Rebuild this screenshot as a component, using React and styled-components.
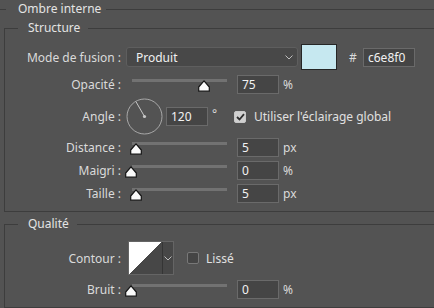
import React from 'react';
import styled, { createGlobalStyle } from 'styled-components';

const Global = createGlobalStyle`
  html, body { margin: 0; padding: 0; background: #535353; }
  body {
    width: 434px; height: 308px; overflow: hidden;
    font-family: "Noto Sans", "Open Sans", sans-serif;
    font-size: 12px; color: #dadada;
  }
`;

const Panel = styled.div`
  width: 434px;
  height: 308px;
  overflow: hidden;
  background: #535353;
`;

const Outer = styled.fieldset`
  margin: 0;
  padding: 0;
  min-width: 0;
  border: none;
  border-top: 1px solid #3d3d3d;
`;

const OuterLegend = styled.legend`
  margin-left: 6px;
  padding: 0 5px 0 12px;
  line-height: 18px;
  color: #e4e4e4;
`;

const Group = styled.fieldset`
  margin: ${p => p.$mt}px 0 0 4px;
  padding: 0 0 8px 0;
  min-width: 0;
  border: 1px solid #3d3d3d;
  border-right: none;
`;

const GroupLegend = styled.legend`
  margin-left: 13px;
  padding: 0 8px 0 10px;
  line-height: 16px;
  color: #e4e4e4;
`;

const Rows = styled.div`
  padding-top: ${p => p.$pt}px;
`;

const Row = styled.div`
  display: grid;
  grid-template-columns: 116px 1fr;
  column-gap: 5px;
  align-items: center;
  height: ${p => p.$h}px;
  margin-top: ${p => p.$mt || 0}px;
`;

const Label = styled.div`
  text-align: right;
  white-space: nowrap;
  color: #dadada;
`;

const Controls = styled.div`
  display: flex;
  align-items: center;
  height: 100%;
`;

const Select = styled.div`
  box-sizing: border-box;
  width: 172px;
  height: 20px;
  border: 1px solid #5e5e5e;
  border-radius: 3px;
  background: #484848;
  display: flex;
  align-items: center;
  justify-content: space-between;
  padding: 0 4px 0 9px;
  color: #f0f0f0;
`;

const Swatch = styled.div`
  box-sizing: border-box;
  width: 36px;
  height: 26px;
  margin-left: 3px;
  border: 1px solid #262626;
  background: ${p => p.$color};
`;

const Hash = styled.span`
  width: 10px;
  margin-left: 12px;
  color: #dadada;
`;

const NumInput = styled.div`
  box-sizing: border-box;
  width: ${p => p.$w || 42}px;
  height: 19px;
  margin-left: ${p => p.$ml || 0}px;
  border: 1px solid #6a6a6a;
  background: #454545;
  color: #f2f2f2;
  padding-left: 4px;
  display: flex;
  align-items: center;
`;

const Unit = styled.span`
  margin-left: 4px;
  color: #dadada;
`;

const SliderWrap = styled.div`
  position: relative;
  width: 106px;
  height: 19px;
  margin-right: 5px;
`;

const Track = styled.div`
  position: absolute;
  left: 6px;
  top: 4px;
  width: 95px;
  height: 3px;
  background: #727272;
`;

const Thumb = styled.svg`
  position: absolute;
  top: 5px;
  width: 12px;
  height: 12px;
`;

const Dial = styled.svg`
  width: 37px;
  height: 37px;
  flex: none;
`;

const Degree = styled.span`
  margin-left: 4px;
  width: 18px;
  align-self: flex-start;
  margin-top: 10px;
  line-height: 12px;
  color: #dadada;
`;

const Check = styled.div`
  box-sizing: border-box;
  width: 12px;
  height: 12px;
  margin-left: ${p => p.$ml}px;
  border-radius: 2px;
  border: 1px solid ${p => (p.$on ? '#c8c8c8' : '#787878')};
  background: ${p => (p.$on ? '#d0d0d0' : '#454545')};
  display: flex;
  align-items: center;
  justify-content: center;
`;

const CheckText = styled.span`
  margin-left: ${p => p.$ml}px;
  color: #e0e0e0;
  white-space: nowrap;
`;

const CurveBox = styled.div`
  box-sizing: border-box;
  width: 46px;
  height: 34px;
  margin-left: 2px;
  border: 1px solid #656565;
  display: flex;
`;

const CurvePreview = styled.svg`
  width: 33px;
  height: 32px;
  display: block;
`;

const CurveArrow = styled.div`
  flex: 1;
  border-left: 1px solid #353535;
  background: #474747;
  display: flex;
  align-items: center;
  justify-content: center;
`;

const Chevron = () => (
  <svg width="8" height="5" viewBox="0 0 8 5">
    <polyline points="0.5,0.5 4,4 7.5,0.5" fill="none" stroke="#bdbdbd" strokeWidth="1" />
  </svg>
);

const Slider = ({ value }) => {
  const center = 5 + (value / 100) * 97;
  return (
    <SliderWrap>
      <Track />
      <Thumb viewBox="0 0 12 12" style={{ left: center - 6 }}>
        <path
          d="M6 0.8 L11.3 7 L11.3 11.2 L0.7 11.2 L0.7 7 Z"
          fill="#fafafa"
          stroke="#141414"
          strokeWidth="1.2"
          strokeLinejoin="round"
        />
      </Thumb>
    </SliderWrap>
  );
};

const SliderRow = ({ label, value, unit, mt }) => (
  <Row $h={19} $mt={mt}>
    <Label>{label}</Label>
    <Controls>
      <Slider value={value} />
      <NumInput>{value}</NumInput>
      <Unit>{unit}</Unit>
    </Controls>
  </Row>
);

const angle = 120;
const rad = (angle * Math.PI) / 180;
const hx = 18.5 + Math.cos(rad) * 17;
const hy = 18.5 - Math.sin(rad) * 17;

export default function App() {
  return (
    <Panel>
      <Global />
      <Outer>
        <OuterLegend>Ombre interne</OuterLegend>
        <Group $mt={2}>
          <GroupLegend>Structure</GroupLegend>
          <Rows $pt={8}>
            <Row $h={26}>
              <Label>Mode de fusion :</Label>
              <Controls>
                <Select>
                  <span>Produit</span>
                  <Chevron />
                </Select>
                <Swatch $color="#c6e8f0" />
                <Hash>#</Hash>
                <NumInput $w={52} $ml={4}>c6e8f0</NumInput>
              </Controls>
            </Row>
            <SliderRow label="Opacité :" value={75} unit="%" mt={5} />
            <Row $h={37} $mt={4}>
              <Label>Angle :</Label>
              <Controls>
                <Dial viewBox="0 0 37 37">
                  <circle cx="18.5" cy="18.5" r="17.5" fill="none" stroke="#a8a8a8" strokeWidth="1" />
                  <line x1="18.5" y1="18.5" x2={hx} y2={hy} stroke="#c8c8c8" strokeWidth="1" />
                  <circle cx="18.5" cy="18.5" r="1.6" fill="#c8c8c8" />
                </Dial>
                <NumInput $ml={3}>{angle}</NumInput>
                <Degree>°</Degree>
                <Check $on $ml={4}>
                  <svg width="9" height="8" viewBox="0 0 9 8">
                    <polyline points="1,4 3.5,6.5 8,1.2" fill="none" stroke="#2e2e2e" strokeWidth="1.8" />
                  </svg>
                </Check>
                <CheckText $ml={8}>Utiliser l'éclairage global</CheckText>
              </Controls>
            </Row>
            <SliderRow label="Distance :" value={5} unit="px" mt={3} />
            <SliderRow label="Maigri :" value={0} unit="%" mt={4} />
            <SliderRow label="Taille :" value={5} unit="px" mt={4} />
          </Rows>
        </Group>
        <Group $mt={4}>
          <GroupLegend>Qualité</GroupLegend>
          <Rows $pt={9}>
            <Row $h={34}>
              <Label>Contour :</Label>
              <Controls>
                <CurveBox>
                  <CurvePreview viewBox="0 0 33 32" shapeRendering="crispEdges">
                    <rect x="0" y="0" width="33" height="32" fill="#474747" />
                    <polygon points="0,0 33,0 0,32" fill="#ffffff" />
                  </CurvePreview>
                  <CurveArrow>
                    <Chevron />
                  </CurveArrow>
                </CurveBox>
                <Check $ml={13} />
                <CheckText $ml={7}>Lissé</CheckText>
              </Controls>
            </Row>
            <SliderRow label="Bruit :" value={0} unit="%" mt={5} />
          </Rows>
        </Group>
      </Outer>
    </Panel>
  );
}
